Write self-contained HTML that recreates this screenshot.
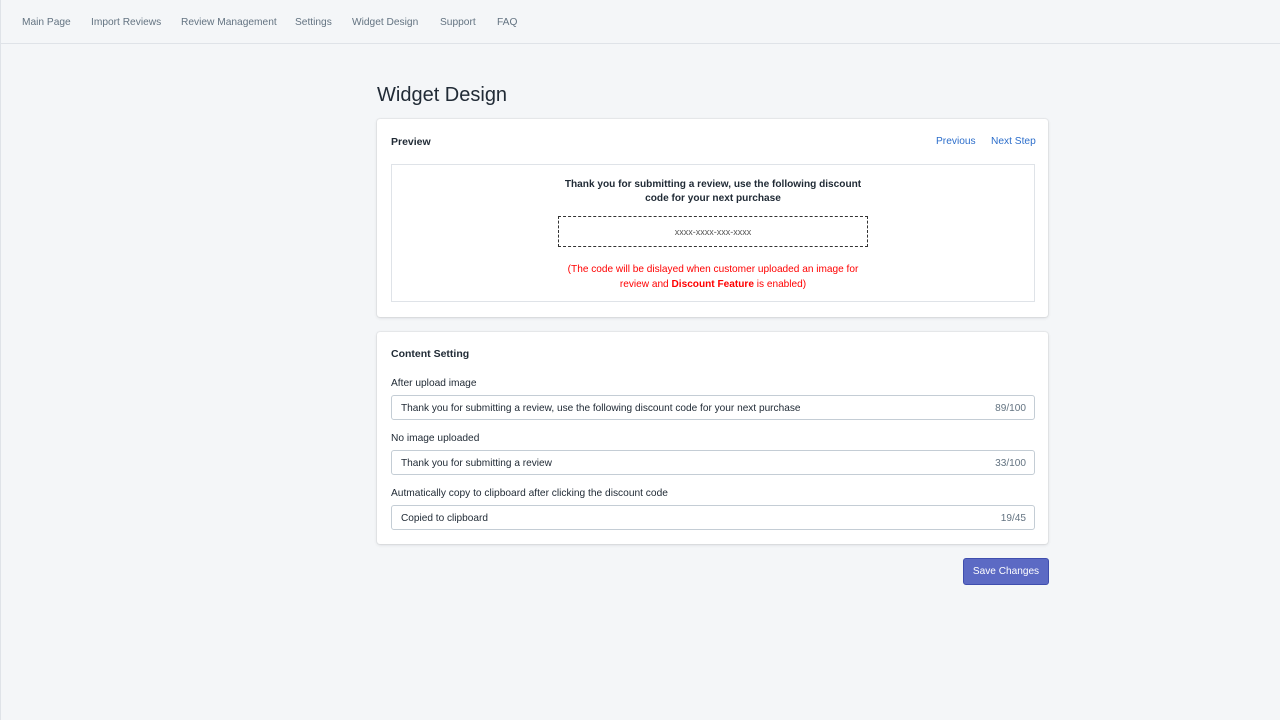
<!DOCTYPE html>
<html><head><meta charset="utf-8"><style>
*{box-sizing:border-box;margin:0;padding:0}
body{width:1280px;height:720px;background:#f4f6f8;font-family:"Liberation Sans",sans-serif;color:#212b36;position:relative;overflow:hidden}
.lb{position:absolute;left:0;top:0;width:1px;height:720px;background:#dfe3e8}
.nav{position:absolute;left:0;top:0;width:1280px;height:44px;border-bottom:1px solid #dfe3e8}
.nav span{position:absolute;top:17px;font-size:10.2px;color:#637381;white-space:nowrap}
h1{position:absolute;left:377px;top:84px;font-size:20px;font-weight:normal;color:#212b36}
.card{position:absolute;left:377px;width:671px;background:#fff;border-radius:3px;box-shadow:0 0 0 1px rgba(63,63,68,.05),0 1px 3px rgba(63,63,68,.15)}
.t{position:absolute;font-size:10.2px;white-space:nowrap}
.inp{position:absolute;left:14px;width:644px;height:25px;border:1px solid #c4cdd5;border-radius:3px;font-size:10.1px}
.inp .a{position:absolute;left:9px;top:7px}
.inp .b{position:absolute;right:8px;top:7px;color:#637381}
</style></head><body>
<div class="lb"></div>
<div class="nav">
<span style="left:22px">Main Page</span>
<span style="left:91px">Import Reviews</span>
<span style="left:181px">Review Management</span>
<span style="left:295px">Settings</span>
<span style="left:352px">Widget Design</span>
<span style="left:440px">Support</span>
<span style="left:497px">FAQ</span>
</div>
<h1>Widget Design</h1>
<div class="card" style="top:119px;height:198px">
<div class="t" style="left:14px;top:17px;font-weight:bold;font-size:10.5px">Preview</div>
<div class="t" style="left:559px;top:17px;color:#2c6ecb">Previous</div>
<div class="t" style="left:614px;top:17px;color:#2c6ecb">Next Step</div>
<div style="position:absolute;left:14px;top:45px;width:644px;height:138px;border:1px solid #dfe3e8">
<div style="position:absolute;left:0;width:100%;top:13px;text-align:center;font-weight:bold;font-size:10.1px;line-height:14px">Thank you for submitting a review, use the following discount<br>code for your next purchase</div>
<div style="position:absolute;left:166px;top:51px;width:310px;height:31px;border:1px dashed #333;text-align:center;line-height:30px;font-size:9px;color:#555">xxxx-xxxx-xxx-xxxx</div>
<div style="position:absolute;left:0;width:100%;top:97px;text-align:center;font-size:10.1px;line-height:15px;color:#f00">(The code will be dislayed when customer uploaded an image for<br>review and <b>Discount Feature</b> is enabled)</div>
</div>
</div>
<div class="card" style="top:332px;height:212px">
<div class="t" style="left:14px;top:16px;font-weight:bold;font-size:10.5px">Content Setting</div>
<div class="t" style="left:14px;top:46px">After upload image</div>
<div class="inp" style="top:63px"><span class="a">Thank you for submitting a review, use the following discount code for your next purchase</span><span class="b">89/100</span></div>
<div class="t" style="left:14px;top:101px">No image uploaded</div>
<div class="inp" style="top:118px"><span class="a">Thank you for submitting a review</span><span class="b">33/100</span></div>
<div class="t" style="left:14px;top:156px">Autmatically copy to clipboard after clicking the discount code</div>
<div class="inp" style="top:173px"><span class="a">Copied to clipboard</span><span class="b">19/45</span></div>
</div>
<div style="position:absolute;left:963px;top:558px;width:86px;height:27px;background:#5c6ac4;border:1px solid #3f4eae;border-radius:3px;color:#fff;font-size:10.1px;text-align:center;line-height:26px">Save Changes</div>
</body></html>
